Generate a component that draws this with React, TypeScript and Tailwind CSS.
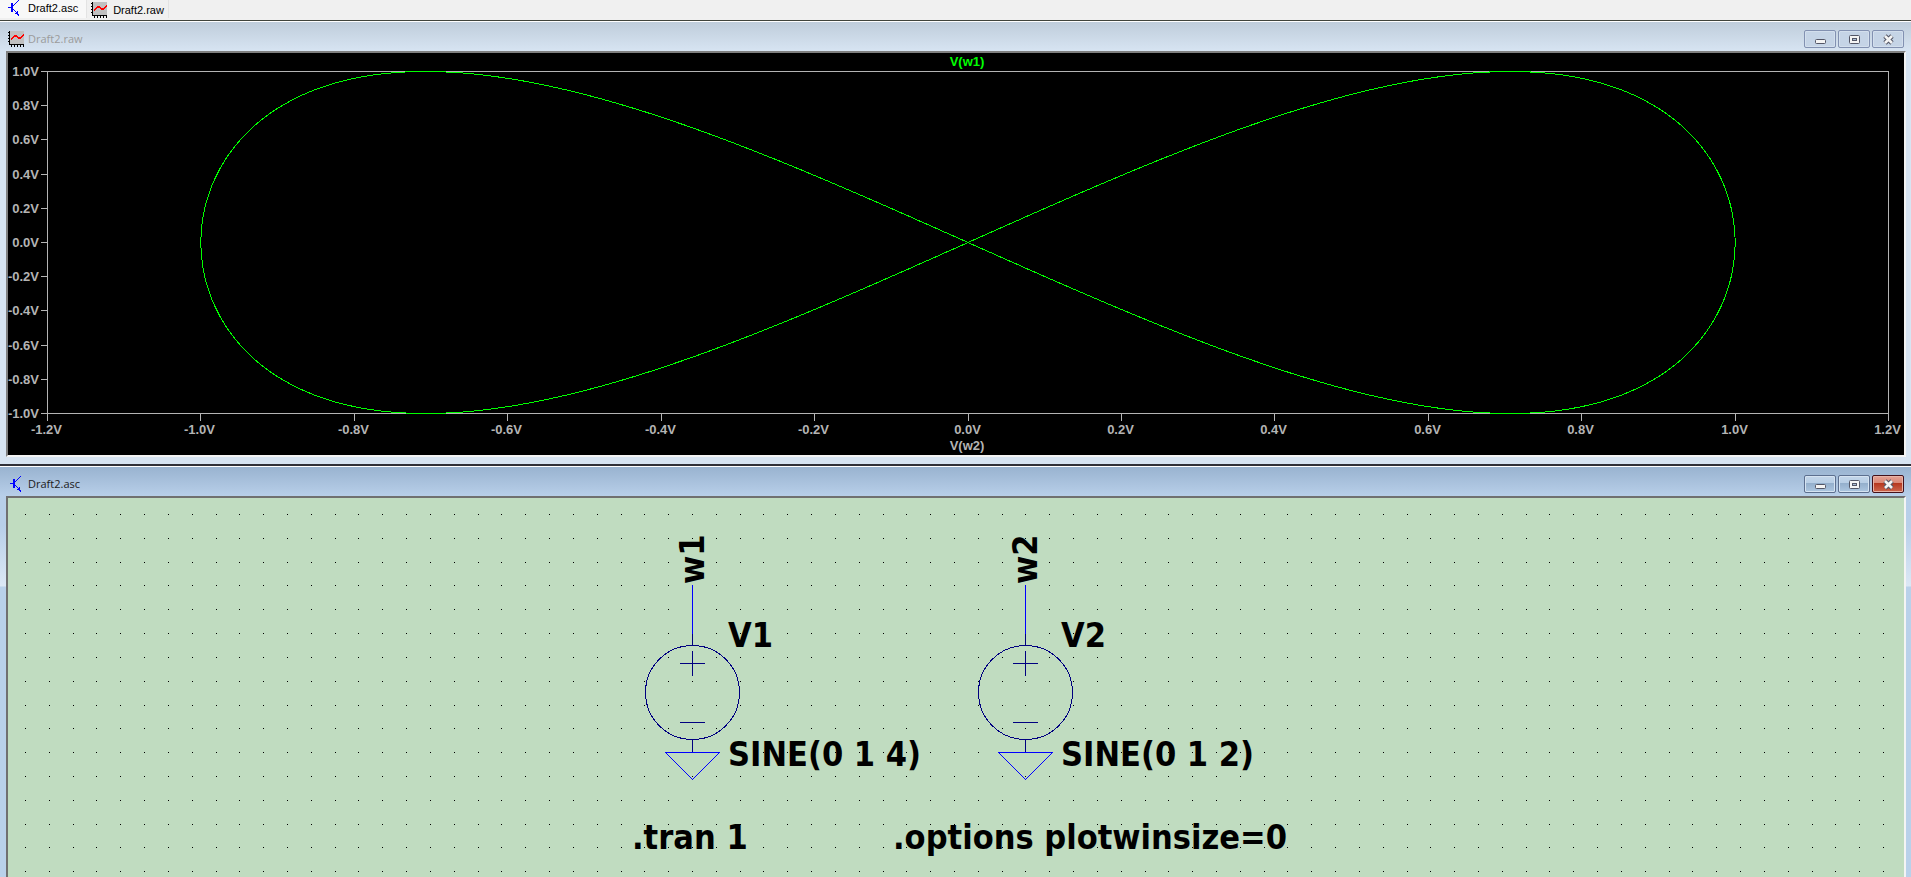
import React, { useId } from "react";

function TransistorIcon() {
  return (
    <svg width="16" height="16" viewBox="0 0 16 16" shapeRendering="crispEdges" aria-hidden="true" className="shrink-0">
      <g fill="#0000ff">
        <path d="M2 7h3v1h-3zM5 3h1v9h-1zM6 3h1v9h-1z" />
        <path d="M7 5h1v1h-1zM8 4h1v1h-1zM9 3h1v1h-1zM10 2h1v1h-1zM11 1h1v1h-1zM12 0h1v1h-1z" />
        <path d="M7 9h1v1h-1zM8 10h1v1h-1zM9 11h1v1h-1zM10 12h1v1h-1zM11 11h1v4h-1zM9 13h3v1h-3zM10 12h2v2h-2zM12 14h1v2h-1z" />
      </g>
    </svg>
  );
}

function PlotIcon() {
  return (
    <svg width="16" height="16" viewBox="0 0 16 16" shapeRendering="crispEdges" aria-hidden="true" className="shrink-0">
      <rect x="2" y="0" width="14" height="13" fill="#c0c0c0" />
      <path
        d="M1 0h1v14h-1zM1 13h15v1h-15zM0 1h2v1h-2zM0 4h2v1h-2zM0 7h2v1h-2zM0 10h2v1h-2zM3 14h1v2h-1zM6 14h1v2h-1zM9 14h1v2h-1zM12 14h1v2h-1zM15 14h1v2h-1z"
        fill="#000"
      />
      <path
        d="M3 7h1v2h-1zM4 6h1v2h-1zM5 5h1v2h-1zM6 4h3v2h-3zM9 5h1v2h-1zM10 6h3v2h-3zM13 5h1v2h-1zM14 4h1v2h-1zM15 3h1v2h-1z"
        fill="#ff0000"
      />
    </svg>
  );
}

type Kind = "minimize" | "maximize" | "close";

function Glyph({ kind }: { kind: Kind }) {
  return (
    <svg width="13" height="11" viewBox="0 0 13 11" aria-hidden="true">
      {kind === "minimize" && <rect x="1.5" y="5.5" width="10" height="4" rx="1" fill="#f4f4f4" stroke="#535666" />}
      {kind === "maximize" && (
        <>
          <rect x="1.5" y="1.5" width="10" height="8" rx="1" fill="#f4f4f4" stroke="#535666" />
          <rect x="4.5" y="4.5" width="4" height="2" fill="#a9bdd6" stroke="#535666" />
        </>
      )}
      {kind === "close" && (
        <>
          <path d="M3 2L10 9M10 2L3 9" stroke="#535666" strokeWidth="4.6" />
          <path d="M3 2L10 9M10 2L3 9" stroke="#f4f4f4" strokeWidth="2.6" />
        </>
      )}
    </svg>
  );
}

function CaptionButton({ kind, active }: { kind: Kind; active: boolean }) {
  const look = !active
    ? "border-[#8291b1] bg-[#c5d4e6] shadow-[inset_0_0_0_1px_#d3dfed]"
    : kind === "close"
      ? "border-[#43101a] bg-linear-to-b from-[#e5a194] from-0% via-[#d98775] via-45% to-[#c66a4e] shadow-[inset_0_0_0_1px_#e8b3a6]"
      : "border-[#5c6f8f] bg-linear-to-b from-[#c3d6ea] to-[#a9c3de] shadow-[inset_0_0_0_1px_#d5e3f1]";
  return (
    <button
      type="button"
      aria-label={kind}
      className={`relative flex h-[18px] w-8 items-center justify-center overflow-hidden rounded-xs border ${look}`}
    >
      {active && (
        <span
          className={
            kind === "close"
              ? "absolute inset-x-px bottom-px h-[8px] bg-linear-to-b from-[#b5341b] to-[#cb6148]"
              : "absolute inset-x-px bottom-px h-[8px] bg-linear-to-b from-[#93aecb] to-[#aac4df]"
          }
        />
      )}
      <span className="relative">
        <Glyph kind={kind} />
      </span>
    </button>
  );
}

function TitleBar({ title, icon, active }: { title: string; icon: React.ReactNode; active: boolean }) {
  return (
    <header
      className={`flex h-[30px] items-end justify-between border-t border-white pr-[7px] pb-[3px] pl-2 ${
        active ? "bg-linear-to-b from-[#99b3d0] to-[#b8cfe9]" : "bg-linear-to-b from-[#bfcddb] to-[#d7e4f2]"
      }`}
    >
      <h2 className={`flex items-center gap-1 font-['Open_Sans',sans-serif] text-[11px] leading-[18px] ${active ? "text-[#1a1a1a]" : "text-[#9b9b9b]"}`}>
        {icon}
        {title}
      </h2>
      <div className="flex gap-0.5">
        <CaptionButton kind="minimize" active={active} />
        <CaptionButton kind="maximize" active={active} />
        <CaptionButton kind="close" active={active} />
      </div>
    </header>
  );
}

const LEFT = 39.5;
const RIGHT = 1880.5;
const TOP = 18.5;
const BOTTOM = 360.5;
const toX = (v: number) => Math.round(LEFT + ((v + 1.2) / 2.4) * (RIGHT - LEFT) - 0.5) + 0.5;
const toY = (v: number) => Math.round(TOP + ((1 - v) / 2) * (BOTTOM - TOP) - 0.5) + 0.5;
const xTicks = Array.from({ length: 13 }, (_, i) => (i - 6) / 5);
const yTicks = Array.from({ length: 11 }, (_, i) => (5 - i) / 5);
const trace = Array.from({ length: 401 }, (_, i) => {
  const t = (i / 400) * 2 * Math.PI;
  const x = (LEFT + RIGHT) / 2 + (Math.sin(t) * (RIGHT - LEFT)) / 2.4;
  const y = (TOP + BOTTOM) / 2 - (Math.sin(2 * t) * (BOTTOM - TOP)) / 2;
  return `${x.toFixed(1)},${y.toFixed(1)}`;
}).join(" ");
const volts = (v: number) => `${v.toFixed(1)}V`;

function WaveformPlot() {
  return (
    <svg
      viewBox="0 0 1896 402"
      className="block w-full bg-black font-['Liberation_Sans',Arial,sans-serif] text-[13px] font-bold"
      role="img"
      aria-label="V(w1) against V(w2)"
    >
      <g stroke="#b4b4b4" fill="none" shapeRendering="crispEdges">
        <rect x={LEFT} y={TOP} width={RIGHT - LEFT} height={BOTTOM - TOP} />
        {xTicks.map((v) => (
          <line key={v} x1={toX(v)} x2={toX(v)} y1={BOTTOM} y2={BOTTOM + 7} />
        ))}
        {yTicks.map((v) => (
          <line key={v} x1={LEFT - 7} x2={LEFT} y1={toY(v)} y2={toY(v)} />
        ))}
      </g>
      <g fill="#b4b4b4">
        {xTicks.map((v) => (
          <text key={v} x={toX(v) - 1} y="381" textAnchor="middle">
            {volts(v)}
          </text>
        ))}
        {yTicks.map((v) => (
          <text key={v} x="31" y={toY(v) + 4.5} textAnchor="end">
            {volts(v)}
          </text>
        ))}
        <text x="959" y="397" textAnchor="middle">
          V(w2)
        </text>
      </g>
      <polyline points={trace} fill="none" stroke="#00ff00" shapeRendering="crispEdges" />
      <text x="959" y="13" textAnchor="middle" fill="#00ff00">
        V(w1)
      </text>
    </svg>
  );
}

const PITCH = 23.82;
const columns = Array.from({ length: 79 }, (_, i) => Math.round(17 + i * PITCH));
const rows = Array.from({ length: 16 }, (_, i) => Math.round(16 + i * PITCH));
const dots = rows.map((y) => columns.map((x) => `M${x} ${y}h1v1h-1z`).join("")).join("");

function VoltageSource({ x, name, net, value }: { x: number; name: string; net: string; value: string }) {
  return (
    <g transform={`translate(${x} 0)`}>
      <g fill="none" stroke="#0000ff" shapeRendering="crispEdges">
        <path d="M0.5 87V136M-26.5 254.5H27.5L0.5 281.5Z" />
        <g stroke="#000080">
          <path d="M0.5 136V148M-12 165.5H13M0.5 153V178M-12 224.5H13M0.5 242V254" />
          <circle cx="0.5" cy="194.5" r="47" />
        </g>
      </g>
      <text transform="translate(12 86) rotate(-90)">{net}</text>
      <text x="36" y="149">
        {name}
      </text>
      <text x="36" y="268">
        {value}
      </text>
    </g>
  );
}

function Schematic() {
  const id = useId();
  return (
    <svg
      width="1896"
      height="379"
      className="block font-['DejaVu_Sans_Condensed','DejaVu_Sans',sans-serif] text-[34px] font-bold"
      role="img"
      aria-labelledby={id}
    >
      <title id={id}>Draft2 schematic</title>
      <path d={dots} fill="#000" shapeRendering="crispEdges" />
      <VoltageSource x={684} name="V1" net="w1" value="SINE(0 1 4)" />
      <VoltageSource x={1017} name="V2" net="w2" value="SINE(0 1 2)" />
      <text x="624" y="351">
        .tran 1
      </text>
      <text x="885" y="351">
        .options plotwinsize=0
      </text>
    </svg>
  );
}

export default function App() {
  return (
    <div className="flex min-h-screen flex-col overflow-hidden bg-[#f0f0f0]">
      <nav className="flex h-5 items-start font-['Liberation_Sans',Arial,sans-serif] text-[11px] leading-4 text-black">
        <a href="#schematic" className="flex h-[18px] items-start gap-1.5 bg-[#f8f8f8] pr-2 pl-1.5">
          <TransistorIcon />
          Draft2.asc
        </a>
        <a href="#waveform" className="flex h-[18px] items-end gap-1.5 border-x border-[#e3e3e3] pr-1 pl-1">
          <PlotIcon />
          Draft2.raw
        </a>
      </nav>
      <section id="waveform" className="border-t border-[#40443c] bg-[#d7e4f2]">
        <TitleBar title="Draft2.raw" icon={<PlotIcon />} active={false} />
        <div className="pr-[5px] pb-[7px] pl-1.5">
          <div className="border-2 border-t-[#808080] border-r-[#f4f4f4] border-b-[#f4f4f4] border-l-[#808080]">
            <WaveformPlot />
          </div>
        </div>
      </section>
      <section id="schematic" className="flex grow flex-col border-t-2 border-[#303038] bg-[#b9d1ea]">
        <TitleBar title="Draft2.asc" icon={<TransistorIcon />} active />
        <div className="flex grow bg-[linear-gradient(to_bottom,#b8cfe9_0,#b8cfe9_30px,#dce8f5_90px,#b9d1ea_91px)] pr-[5px] pl-1.5">
          <div className="grow overflow-hidden border-x-2 border-t-2 border-t-[#707070] border-r-[#f4f4f4] border-l-[#707070] bg-[#c0dcc0]">
            <Schematic />
          </div>
        </div>
      </section>
    </div>
  );
}
